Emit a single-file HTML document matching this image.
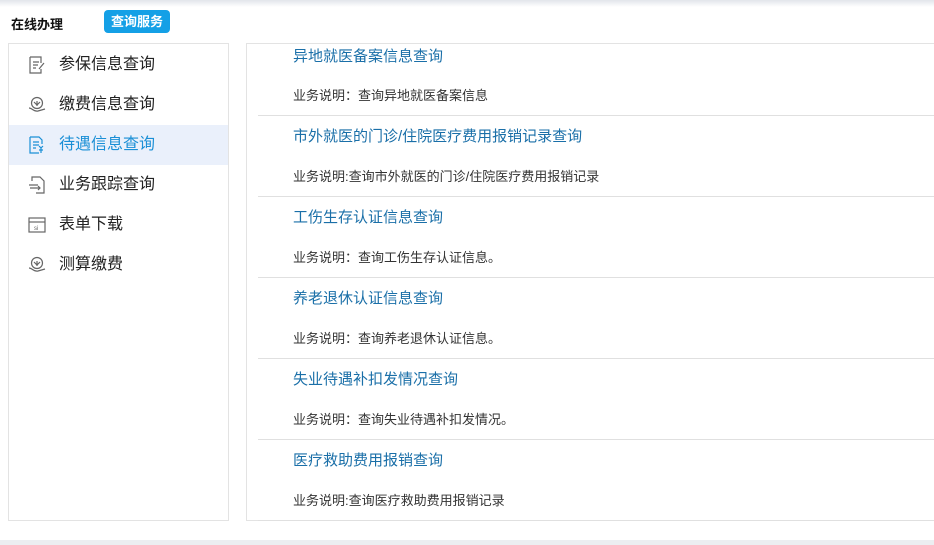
<!DOCTYPE html>
<html><head><meta charset="utf-8"><style>
*{margin:0;padding:0;box-sizing:border-box}
body{width:934px;height:545px;background:#fff;position:relative;overflow:hidden;font-family:"Liberation Sans","Noto Sans CJK SC",sans-serif}
.top{position:absolute;left:0;top:0;width:934px;height:7px;background:linear-gradient(#e2e5eb,#fff)}
.h1{position:absolute;left:11px;top:14px;font-size:13px;font-weight:bold;color:#111}
.badge{position:absolute;left:104px;top:10px;width:66px;height:23px;background:#14a0e6;border-radius:4px;color:#fff;font-size:13px;font-weight:bold;text-align:center;line-height:23px}
.side{position:absolute;left:8px;top:43px;width:221px;height:478px;border:1px solid #e3e3e3;padding-top:1px}
.it{height:40px;line-height:40px;font-size:16px;color:#222;padding-left:50px;position:relative}
.it.on{background:#eaf0fb;color:#1a8fd6}
.it svg{position:absolute;left:19px;top:11px}
.main{position:absolute;left:246px;top:43px;width:700px;height:478px;border:1px solid #e3e3e3}
.row{position:absolute;left:11px;width:690px;height:81px;border-bottom:1px solid #e0e0e0}
.t{position:absolute;left:35px;font-size:15px;color:#1a6fa8}
.d{position:absolute;left:35px;font-size:13px;color:#333}
.bot{position:absolute;left:0;top:540px;width:934px;height:5px;background:#eceef1}
</style></head><body>
<div class="top"></div>
<div class="h1">在线办理</div>
<div class="badge">查询服务</div>
<div class="side">
<div class="it"><svg width="18" height="18" viewBox="0 0 18 18" fill="none" stroke="#666" stroke-width="1.2"><path d="M2 1h11v6M2 1v16h11v-4M5 6h6M5 9h5M5 12h3M11 13l5-6"/></svg>参保信息查询</div>
<div class="it"><svg width="18" height="18" viewBox="0 0 18 18" fill="none" stroke="#666" stroke-width="1.2"><circle cx="9" cy="7" r="5.5"/><path d="M6 6l3 3 3-3M9 5v5M1 12c3 0 5 4 9 3l7-2"/></svg>缴费信息查询</div>
<div class="it on"><svg width="18" height="18" viewBox="0 0 18 18" fill="none" stroke="#1a8fd6" stroke-width="1.2"><path d="M2 1h9l3 3v4M2 1v16h9M5 6h6M5 9h6M5 12h3M11 10l2 2 2-2M13 12v5M11 14h4"/></svg>待遇信息查询</div>
<div class="it"><svg width="18" height="18" viewBox="0 0 18 18" fill="none" stroke="#666" stroke-width="1.2"><path d="M4 5V1h8l4 4v12H8M2 12h10M10 10l2 2-2 2M1 9h9"/></svg>业务跟踪查询</div>
<div class="it"><svg width="18" height="18" viewBox="0 0 18 18" fill="none" stroke="#666" stroke-width="1.2"><rect x="1" y="2" width="16" height="14"/><path d="M1 6h16"/><text x="6" y="14" font-size="6" fill="#666" stroke="none">si</text></svg>表单下载</div>
<div class="it"><svg width="18" height="18" viewBox="0 0 18 18" fill="none" stroke="#666" stroke-width="1.2"><circle cx="9" cy="7" r="5.5"/><path d="M6 6l3 3 3-3M9 5v5M1 12c3 0 5 4 9 3l7-2"/></svg>测算缴费</div>
</div>
<div class="main">
<div class="row" style="top:-9px"><div class="t" style="top:10px">异地就医备案信息查询</div><div class="d" style="top:50px">业务说明：查询异地就医备案信息</div></div>
<div class="row" style="top:72px"><div class="t" style="top:9px">市外就医的门诊/住院医疗费用报销记录查询</div><div class="d" style="top:50px">业务说明:查询市外就医的门诊/住院医疗费用报销记录</div></div>
<div class="row" style="top:153px"><div class="t" style="top:9px">工伤生存认证信息查询</div><div class="d" style="top:50px">业务说明：查询工伤生存认证信息。</div></div>
<div class="row" style="top:234px"><div class="t" style="top:9px">养老退休认证信息查询</div><div class="d" style="top:50px">业务说明：查询养老退休认证信息。</div></div>
<div class="row" style="top:315px"><div class="t" style="top:9px">失业待遇补扣发情况查询</div><div class="d" style="top:50px">业务说明：查询失业待遇补扣发情况。</div></div>
<div class="row" style="top:396px"><div class="t" style="top:9px">医疗救助费用报销查询</div><div class="d" style="top:50px">业务说明:查询医疗救助费用报销记录</div></div>
</div>
<div class="bot"></div>
</body></html>
